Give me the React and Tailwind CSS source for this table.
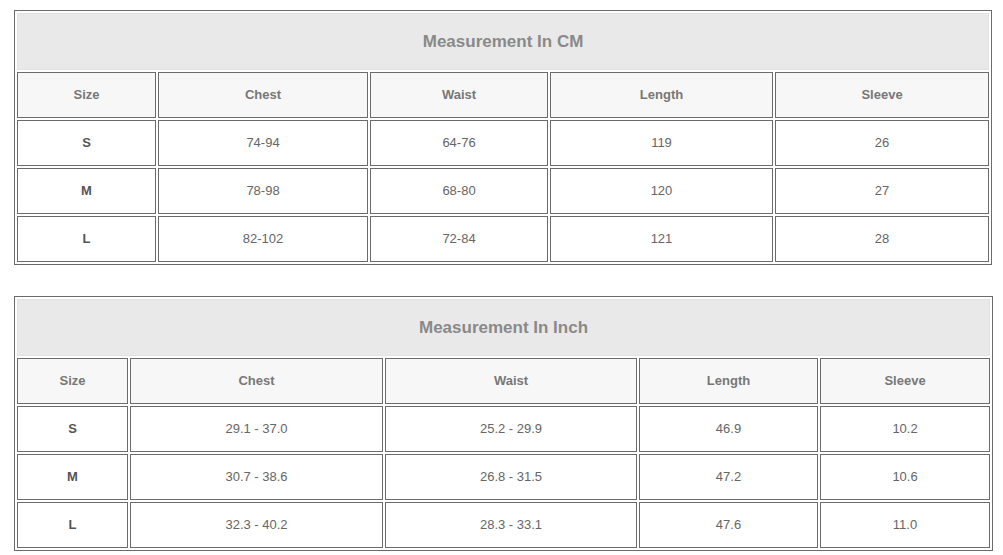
import React from "react";

const tables = [
  {
    title: "Measurement In CM",
    cols: [139, 210, 178, 223, 214],
    rows: [
      ["S", "74-94", "64-76", "119", "26"],
      ["M", "78-98", "68-80", "120", "27"],
      ["L", "82-102", "72-84", "121", "28"],
    ],
  },
  {
    title: "Measurement In Inch",
    cols: [111, 253, 252, 179, 170],
    rows: [
      ["S", "29.1 - 37.0", "25.2 - 29.9", "46.9", "10.2"],
      ["M", "30.7 - 38.6", "26.8 - 31.5", "47.2", "10.6"],
      ["L", "32.3 - 40.2", "28.3 - 33.1", "47.6", "11.0"],
    ],
  },
];

const heads = ["Size", "Chest", "Waist", "Length", "Sleeve"];

function SizeTable({ t }) {
  return (
    <table className="table-fixed border-separate border-spacing-[2px] border border-[#6b6b6b] w-[978px]">
      <colgroup>
        {t.cols.map((w, i) => (
          <col key={i} style={{ width: w }} />
        ))}
      </colgroup>
      <tbody>
        <tr>
          <td
            colSpan={5}
            className="h-[57px] border border-[#e2e2e2] bg-[#e9e9e9] text-center align-middle text-[17px] font-bold text-[#898989]"
          >
            {t.title}
          </td>
        </tr>
        <tr>
          {heads.map((h) => (
            <td
              key={h}
              className="h-[46px] border border-[#6b6b6b] bg-[#f7f7f7] text-center align-middle text-[13px] font-bold text-[#777]"
            >
              {h}
            </td>
          ))}
        </tr>
        {t.rows.map((r, ri) => (
          <tr key={ri}>
            {r.map((c, ci) => (
              <td
                key={ci}
                className={
                  "h-[46px] border border-[#6b6b6b] bg-white text-center align-middle text-[13px] " +
                  (ci === 0 ? "font-bold text-[#555]" : "text-[#666]")
                }
              >
                {c}
              </td>
            ))}
          </tr>
        ))}
      </tbody>
    </table>
  );
}

export default function App() {
  return (
    <div
      className="w-[1003px] h-[555px] bg-white pl-[14px] pt-[10px] flex flex-col gap-[31px]"
      style={{ fontFamily: '"Liberation Sans", Arial, sans-serif' }}
    >
      <SizeTable t={tables[0]} />
      <SizeTable t={tables[1]} />
    </div>
  );
}
